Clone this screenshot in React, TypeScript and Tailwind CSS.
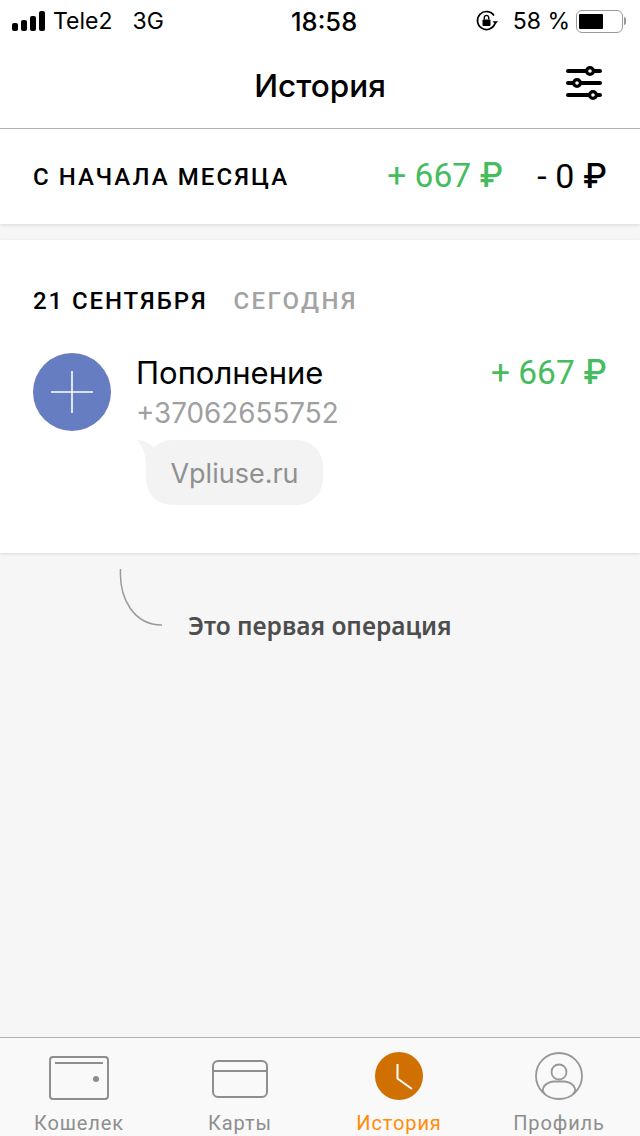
const Ruble = () => <span className="font-medium font-['Inter',sans-serif]">₽</span>;

const Signal = () => (
  <div className="flex items-end gap-[3px] h-[20px] mr-[8px]">
    <div className="w-[6px] h-[8px] rounded-[2px] bg-black" />
    <div className="w-[6px] h-[11px] rounded-[2px] bg-black" />
    <div className="w-[6px] h-[15px] rounded-[2px] bg-black" />
    <div className="w-[6px] h-[20px] rounded-[2px] bg-black" />
  </div>
);

const RotationLock = () => (
  <svg width="24" height="24" viewBox="0 0 24 24" fill="none">
    <path d="M20 14.500A9 9 0 1 1 19 6.500" stroke="#000" strokeWidth="1.700" />
    <path d="M17.600 12.200h5.400l-2.700 3.200z" fill="#000" />
    <rect x="7.500" y="10.500" width="8" height="6.500" rx="1" fill="#000" />
    <path d="M9.300 10.500V8.600a2.200 2.200 0 0 1 4.400 0v1.900" stroke="#000" strokeWidth="1.400" />
  </svg>
);

const FilterIcon = () => (
  <svg width="36" height="34" viewBox="0 0 36 34" fill="none">
    <path d="M2 5h32M2 17h32M2 29h32" stroke="#000" strokeWidth="4" strokeLinecap="round" />
    <circle cx="24" cy="5" r="3.400" fill="#fff" stroke="#000" strokeWidth="3.200" />
    <circle cx="11" cy="17" r="3.400" fill="#fff" stroke="#000" strokeWidth="3.200" />
    <circle cx="27" cy="29" r="3.400" fill="#fff" stroke="#000" strokeWidth="3.200" />
  </svg>
);

const WalletIcon = () => (
  <svg width="60" height="44" viewBox="0 0 60 44" fill="none">
    <rect x="1" y="1" width="58" height="42" rx="3" stroke="#8e8e8e" strokeWidth="2" />
    <path d="M6 7h48" stroke="#8e8e8e" strokeWidth="2" />
    <circle cx="47" cy="23" r="3" fill="#8e8e8e" />
  </svg>
);

const CardIcon = () => (
  <svg width="56" height="38" viewBox="0 0 56 38" fill="none">
    <rect x="1" y="1" width="54" height="36" rx="5" stroke="#8e8e8e" strokeWidth="2" />
    <path d="M1 11h54" stroke="#8e8e8e" strokeWidth="2" />
  </svg>
);

const ClockIcon = () => (
  <svg width="48" height="48" viewBox="0 0 48 48" fill="none">
    <circle cx="24" cy="24" r="24" fill="#cf7000" />
    <path d="M22.500 12v14.500L37 37" stroke="#fff" strokeWidth="2" />
  </svg>
);

const ProfileIcon = () => (
  <svg width="48" height="48" viewBox="0 0 48 48" fill="none">
    <circle cx="24" cy="24" r="23" stroke="#989898" strokeWidth="1.800" />
    <circle cx="24" cy="20" r="7.500" stroke="#989898" strokeWidth="1.800" />
    <path d="M10 42c-2-1.500-2.500-4-2-5.500 1.500-5 8-7 10.500-7h11c3 0 9 2 10.500 7 .5 1.500 0 4-2 5.500" stroke="#989898" strokeWidth="1.800" />
  </svg>
);

const tabs = [
  { label: "Кошелек", icon: <WalletIcon />, color: "text-[#8e8e8e]", cell: "pr-[2px]", top: "pt-[18px]" },
  { label: "Карты", icon: <CardIcon />, color: "text-[#8e8e8e]", cell: "", top: "pt-[22px]" },
  { label: "История", icon: <ClockIcon />, color: "text-[#ff8c0a]", cell: "pr-[2px]", top: "pt-[14px]" },
  { label: "Профиль", icon: <ProfileIcon />, color: "text-[#8e8e8e]", cell: "pr-[2px]", top: "pt-[14px]" },
];

export default function App() {
  return (
    <div className="w-[640px] h-[1136px] flex flex-col overflow-hidden bg-[#f6f6f6] font-['Inter',sans-serif] text-black">
      {/* Status bar */}
      <div className="h-[40px] pt-[2px] shrink-0 bg-white flex items-center justify-between pl-[12px] pr-[14px] text-[23px] relative">
        <div className="flex items-center">
          <Signal />
          <span>Tele2</span>
          <span className="ml-[20px]">3G</span>
        </div>
        <span className="absolute left-[291px] top-[3px] text-[25.5px] font-medium">18:58</span>
        <div className="flex items-center">
          <RotationLock />
          <span className="ml-[14px]">58 %</span>
          <div className="ml-[6px] w-[47px] h-[23px] rounded-[6px] border-[1.5px] border-[#9a9a9a] px-[1.5px] py-[3px]">
            <div className="w-[24px] h-full bg-black rounded-[1px]" />
          </div>
          <div className="w-[2px] h-[8px] ml-[1px] bg-[#9a9a9a] rounded-r-full" />
        </div>
      </div>

      {/* Header */}
      <div className="h-[89px] shrink-0 bg-white border-b border-[#b2b2b2] flex items-center justify-center relative">
        <h1 className="text-[31.5px] font-medium mt-[4px]">История</h1>
        <div className="absolute right-[38px] top-[26px]">
          <FilterIcon />
        </div>
      </div>

      {/* Month summary */}
      <div className="h-[95px] shrink-0 bg-white shadow-[0_1px_4px_rgba(0,0,0,0.12)] flex items-center pl-[33px] pr-[33px] pb-[1px]">
        <span className="text-[24px] font-medium tracking-[2.08px] flex-1 font-['Roboto',sans-serif] mt-[2px]">С НАЧАЛА МЕСЯЦА</span>
        <span className="text-[33.5px] text-[#46bc5e] font-['Roboto',sans-serif]">+ 667 <Ruble /></span>
        <span className="text-[34px] ml-[34px] font-['Roboto',sans-serif]">- 0 <Ruble /></span>
      </div>

      {/* Operations */}
      <div className="mt-[16px] h-[313px] shrink-0 bg-white shadow-[0_1px_3px_rgba(0,0,0,0.12)] px-[33px] pt-[47px]">
        <div className="flex items-center text-[24px] font-medium tracking-[1.9px] leading-[28px] font-['Roboto',sans-serif]">
          <span>21 СЕНТЯБРЯ</span>
          <span className="ml-[26px] text-[#a3a3a3] tracking-[2.4px]">СЕГОДНЯ</span>
        </div>
        <div className="flex mt-[38px]">
          <div className="w-[78px] h-[78px] rounded-full bg-[#667dc2] flex items-center justify-center shrink-0">
            <svg width="42" height="42" viewBox="0 0 42 42" fill="none">
              <path d="M21 0v42M0 21h42" stroke="#fff" strokeWidth="1.600" />
            </svg>
          </div>
          <div className="ml-[25px] flex-1 min-w-0">
            <div className="flex justify-between items-center h-[40px]">
              <span className="text-[31px]">Пополнение</span>
              <span className="text-[33.5px] text-[#46bc5e] font-['Roboto',sans-serif]">+ 667 <Ruble /></span>
            </div>
            <div className="text-[27.8px] leading-[40px] text-[#a0a0a0]">+37062655752</div>
            <div className="relative ml-[10px] mt-[7px] w-[177px] h-[65px] pt-[3px] rounded-[26px] bg-[#f3f3f3] flex items-center justify-center text-[27px] text-[#909090]">
              <svg className="absolute -left-[9px] top-0" width="30" height="30" viewBox="0 0 30 30">
                <path d="M0 0C6 0 12 3 18 8L9 30C9 14 6 6 0 0Z" fill="#f3f3f3" />
              </svg>
              <span className="relative">Vpliuse.ru</span>
            </div>
          </div>
        </div>
      </div>

      {/* First operation note */}
      <div className="flex-1 relative">
        <svg className="absolute left-[118px] top-[16px]" width="46" height="58" viewBox="0 0 46 58" fill="none">
          <path d="M2.500 0C1 30 16 56 44 56" stroke="#9a9a9a" strokeWidth="1.500" />
        </svg>
        <div className="absolute left-[188px] top-[57px] text-[24.5px] font-semibold leading-[32px] text-[#4d4d4d] font-['Noto_Sans',sans-serif]">Это первая операция</div>
      </div>

      {/* Tab bar */}
      <div className="h-[99px] shrink-0 border-t border-[#b2b2b2] bg-[#f9f9f9] grid grid-cols-4">
        {tabs.map((tab) => (
          <div key={tab.label} className={`relative flex flex-col items-center ${tab.cell} ${tab.top}`}>
            {tab.icon}
            <span className={`absolute top-[70px] text-[20px] tracking-[0.9px] font-['Roboto',sans-serif] ${tab.color}`}>{tab.label}</span>
          </div>
        ))}
      </div>
    </div>
  );
}
